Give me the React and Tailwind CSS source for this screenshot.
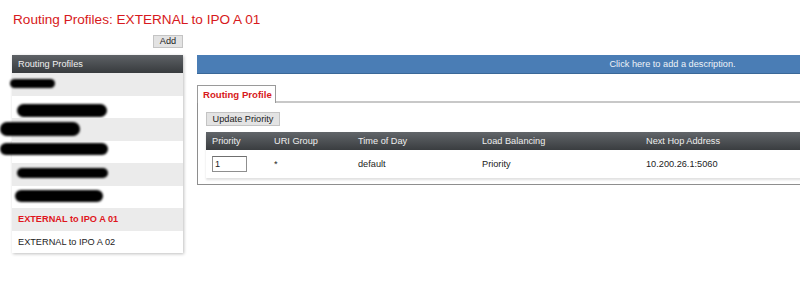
import React from "react";

const rows = [
  { bg: "bg-[#ebebeb]", h: "h-[23px]", scribble: "left-[-2px] top-[6px] w-[45px] h-[9px]" },
  { bg: "bg-white", h: "h-[22px]", scribble: "left-[5px] top-[8px] w-[90px] h-[13px]" },
  { bg: "bg-[#ebebeb]", h: "h-[23px]", scribble: "left-[-12px] top-[4px] w-[80px] h-[14px]" },
  { bg: "bg-white", h: "h-[22px]", scribble: "left-[-12px] top-[2px] w-[108px] h-[12px]" },
  { bg: "bg-[#ebebeb]", h: "h-[23px]", scribble: "left-[5px] top-[5px] w-[91px] h-[10px]" },
  { bg: "bg-white", h: "h-[22px]", scribble: "left-[3px] top-[4px] w-[88px] h-[12px]" },
];

export default function App() {
  return (
    <div className="w-[800px] h-[304px] overflow-hidden bg-white font-['Liberation_Sans',Arial,sans-serif]">
      <div className="pl-[13px] pt-[10px] h-[30px] text-[13.6px] leading-[20px] text-[#d71920]">
        Routing Profiles: EXTERNAL to IPO A 01
      </div>
      <div className="ml-[12px] w-[171px] flex justify-end mt-[5px]">
        <div className="h-[13px] w-[30px] bg-[#e3e3e3] border border-[#c4c4c4] text-[9.2px] leading-[11px] text-[#222] flex items-center justify-center">
          Add
        </div>
      </div>
      <div className="flex mt-[7px] ml-[12px]">
        <div className="w-[171px] shrink-0 shadow-[1px_1px_3px_rgba(0,0,0,0.25)]">
          <div className="h-[18px] bg-gradient-to-b from-[#5e6266] to-[#383b3e] text-[#f0f0f0] text-[9.2px] leading-[18px] pl-[6px]">
            Routing Profiles
          </div>
          {rows.map((r, i) => (
            <div key={i} className={`relative ${r.bg} ${r.h}`}>
              <div className={`absolute ${r.scribble} bg-black rounded-full blur-[1px]`} />
            </div>
          ))}
          <div className="h-[23px] bg-[#ebebeb] text-[9.2px] leading-[23px] pl-[6px] font-bold text-[#e0161d]">
            EXTERNAL to IPO A 01
          </div>
          <div className="h-[22px] bg-white text-[9.2px] leading-[22px] pl-[6px] text-[#222]">
            EXTERNAL to IPO A 02
          </div>
        </div>
        <div className="ml-[14px] w-[951px] shrink-0">
          <div className="h-[19px] bg-[#4a7db5] border-b border-[#3a6898] text-[9.2px] leading-[18px] text-[#eef3f8] text-center">
            Click here to add a description.
          </div>
          <div className="mt-[11px] flex">
            <div className="h-[18px] w-[79px] border-l border-t border-r border-[#9a9a9a] text-[9.6px] leading-[17px] font-bold text-[#d71920] pl-[5px] whitespace-nowrap">
              Routing Profile
            </div>
            <div className="flex-1 border-b-2 border-[#c8c8c8]" />
          </div>
          <div className="border-l border-b border-[#8e8e8e] pl-[8px] pt-[9px] h-[82px]">
            <div className="h-[14px] w-[74px] bg-[#e3e3e3] border border-[#c4c4c4] text-[9.2px] leading-[12px] text-[#222] flex items-center justify-center whitespace-nowrap">
              Update Priority
            </div>
            <div className="mt-[6px] shadow-[0_2px_2px_rgba(0,0,0,0.12)]">
              <div className="h-[18px] bg-gradient-to-b from-[#62666a] to-[#3a3d40] grid grid-cols-[62px_84px_124px_164px_1fr] pl-[6px] text-[9.2px] leading-[18px] text-[#eeeeee]">
                <div>Priority</div>
                <div>URI Group</div>
                <div>Time of Day</div>
                <div>Load Balancing</div>
                <div>Next Hop Address</div>
              </div>
              <div className="h-[28px] bg-white grid grid-cols-[62px_84px_124px_164px_1fr] pl-[6px] text-[9.2px] leading-[28px] text-[#222] items-center">
                <div>
                  <div className="w-[35px] h-[16px] border border-[#8f8f8f] border-t-[#6f6f6f] text-[9.2px] leading-[14px] pl-[2px]">1</div>
                </div>
                <div>*</div>
                <div>default</div>
                <div>Priority</div>
                <div>10.200.26.1:5060</div>
              </div>
            </div>
          </div>
        </div>
      </div>
    </div>
  );
}
